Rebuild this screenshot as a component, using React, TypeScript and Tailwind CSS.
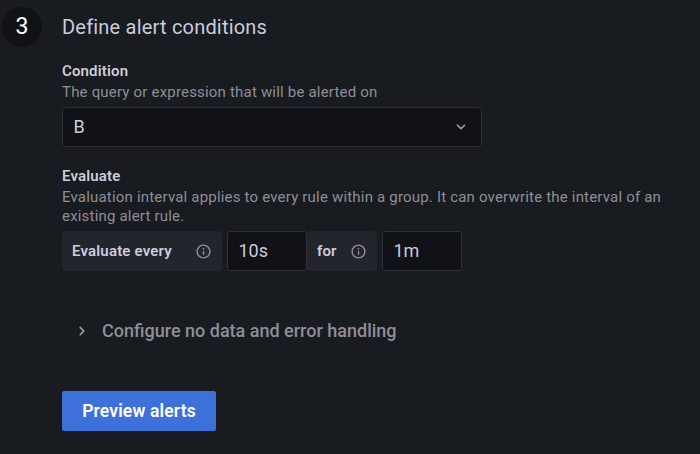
import React from "react";

function Info() {
  return (
    <svg width="17" height="17" viewBox="0 0 24 24" fill="#8e8e99" className="shrink-0">
      <path d="M12 2a10 10 0 1 0 10 10A10 10 0 0 0 12 2Zm0 18a8 8 0 1 1 8-8 8 8 0 0 1-8 8Zm0-9a1 1 0 0 0-1 1v4a1 1 0 0 0 2 0v-4a1 1 0 0 0-1-1Zm0-4a1.25 1.25 0 1 0 1.25 1.25A1.25 1.25 0 0 0 12 7Z" />
    </svg>
  );
}

function Chevron({ className }: { className: string }) {
  return (
    <svg width="20" height="20" viewBox="0 0 24 24" fill="#9a9aa3" className={className}>
      <path d="M17 9.17a1 1 0 0 0-1.41 0L12 12.71 8.46 9.17a1 1 0 0 0-1.41 0 1 1 0 0 0 0 1.42l4.24 4.24a1 1 0 0 0 1.42 0L17 10.59a1 1 0 0 0 0-1.42Z" />
    </svg>
  );
}

export default function App() {
  return (
    <main className="flex h-[454px] w-[700px] overflow-hidden bg-[#181b1f] font-['Roboto',sans-serif] text-[#ccccdc]">
      <div className="w-[62px] shrink-0 pt-[7px] pl-[2px]">
        <div className="flex size-10 items-center justify-center rounded-full bg-[#111217] text-[23px] text-white">3</div>
      </div>
      <section className="flex w-[620px] flex-col items-start">
        <h1 className="mt-[14px] text-[20px] leading-[26px] tracking-[0.2px]">Define alert conditions</h1>
        <label className="mt-[21px] text-[15px] leading-5 font-semibold tracking-[0.15px]">Condition</label>
        <p className="mt-[1px] text-[15px] leading-[21px] tracking-[0.19px] text-[#8e8e99]">The query or expression that will be alerted on</p>
        <div className="mt-[4px] flex h-10 w-[420px] items-center justify-between rounded-[3px] border border-[#2e3036] bg-[#111217] pr-[10px] pl-[10.5px] text-[18px]">
          <span className="pb-[2px]">B</span>
          <Chevron className="" />
        </div>
        <label className="mt-[19px] text-[15px] leading-5 font-semibold tracking-[0.15px]">Evaluate</label>
        <p className="mt-[2px] text-[15px] leading-[19px] tracking-[0.19px] text-[#8e8e99]">
          Evaluation interval applies to every rule within a group. It can overwrite the interval of an<br />existing alert rule.
        </p>
        <div className="mt-[5px] flex h-10 text-[15px] font-semibold">
          <div className="mr-[5px] flex w-40 items-center justify-between rounded-[4px] bg-[#22252b] px-[10px] tracking-[0.18px]">Evaluate every<Info /></div>
          <div className="flex w-20 items-center rounded-[3px] border border-[#2e3036] bg-[#111217] pb-[2px] pl-[10.5px] text-[18px] font-normal">10s</div>
          <div className="mr-[5px] flex w-[70px] items-center justify-between rounded-[4px] bg-[#22252b] px-[10px] tracking-[0.15px]">for<Info /></div>
          <div className="flex w-20 items-center rounded-[3px] border border-[#2e3036] bg-[#111217] pb-[2px] pl-[10.5px] text-[18px] font-normal">1m</div>
        </div>
        <div className="mt-[48px] flex h-6 items-center pl-[10px] text-[18px] font-medium text-[#8e8e99]">
          <Chevron className="mr-[10px] -rotate-90" /><span className="pb-[2px]">Configure no data and error handling</span>
        </div>
        <button className="mt-[48px] h-10 w-[154px] rounded-[2px] bg-[#3d71d9] text-[17.5px] font-semibold tracking-[0.15px] text-white">Preview alerts</button>
      </section>
    </main>
  );
}
